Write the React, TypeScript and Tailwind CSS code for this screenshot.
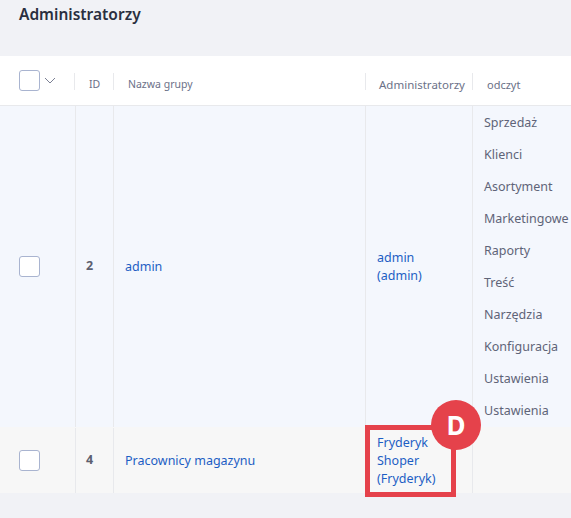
const readPerms = [
  "Sprzedaż",
  "Klienci",
  "Asortyment",
  "Marketingowe",
  "Raporty",
  "Treść",
  "Narzędzia",
  "Konfiguracja",
  "Ustawienia",
  "Ustawienia",
];

function Checkbox() {
  return <div className="h-[21px] w-[21px] rounded-[3px] border border-[#a9b4d0] bg-white" />;
}

function HeaderCell({ label, className }: { label: string; className: string }) {
  return (
    <div className={`h-[17px] border-l border-[#e8e9ec] pt-[3px] leading-[17px] whitespace-nowrap text-[#6b7188] ${className}`}>
      {label}
    </div>
  );
}

export default function App() {
  return (
    <div className="relative h-[518px] w-[571px] overflow-hidden bg-[#f1f2f6] font-['Noto_Sans',sans-serif]">
      <h1 className="h-[56px] pl-[19px] pt-[2px] text-[15.5px] leading-[24px] font-semibold text-[#2a2f3f]">
        Administratorzy
      </h1>

      <div className="grid grid-cols-[75px_38px_252px_107px_99px]">
        {/* header */}
        <div className="col-span-5 grid h-[50px] grid-cols-subgrid items-center border-b border-[#e8e9ec] bg-white pt-[2px]">
          <div className="mb-[2px] flex items-center gap-[4px] pl-[19px]">
            <Checkbox />
            <svg width="12" height="7" viewBox="0 0 12 7" fill="none" className="text-[#7b8094]">
              <path d="M1 1l5 5 5-5" stroke="currentColor" strokeWidth="1" />
            </svg>
          </div>
          <HeaderCell label="ID" className="-ml-px pl-[14px] text-[10.5px]" />
          <HeaderCell label="Nazwa grupy" className="pl-[14px] text-[10.5px]" />
          <HeaderCell label="Administratorzy" className="pl-[13px] text-[11.5px]" />
          <HeaderCell label="odczyt" className="pl-[14px] text-[11px]" />
        </div>

        {/* admin row */}
        <div className="col-span-5 grid h-[321px] grid-cols-subgrid bg-[#f4f7fd] text-[12.5px] text-[#1d5ec4]">
          <div className="flex items-center pl-[19px]">
            <Checkbox />
          </div>
          <div className="flex items-center border-l border-[#e8e9ec] pl-[10px] font-bold text-[#5c6070]">2</div>
          <div className="flex items-center border-l border-[#e8e9ec] pl-[11px] pt-[2px]">admin</div>
          <div className="flex items-center border-l border-[#e8e9ec] pl-[11px] leading-[18px]">
            <div>
              admin
              <br />
              (admin)
            </div>
          </div>
          <div className="border-l border-[#e8e9ec] pl-[11px] pt-px text-[#5f6478]">
            {readPerms.map((perm, i) => (
              <div key={i} className="h-[32px] whitespace-nowrap leading-[32px]">
                {perm}
              </div>
            ))}
          </div>
        </div>

        {/* warehouse row */}
        <div className="col-span-5 grid h-[66px] grid-cols-subgrid bg-[#f7f7f7] pt-px text-[12.5px] text-[#1d5ec4]">
          <div className="flex items-center pl-[19px]">
            <Checkbox />
          </div>
          <div className="flex items-center border-l border-[#e8e9ec] pl-[10px] font-bold text-[#5c6070]">4</div>
          <div className="flex items-center border-l border-[#e8e9ec] pl-[11px] pt-[2px]">Pracownicy magazynu</div>
          <div className="flex items-center border-l border-[#e8e9ec] pl-[11px] leading-[18px]">
            <div>
              Fryderyk
              <br />
              Shoper
              <br />
              (Fryderyk)
            </div>
          </div>
          <div className="border-l border-[#e8e9ec]" />
        </div>
      </div>

      {/* annotation */}
      <div className="absolute left-[365px] top-[425px] h-[72px] w-[91px] border-[5px] border-[#e5424b]" />
      <div className="absolute left-[431px] top-[400px] flex h-[50px] w-[50px] items-center justify-center rounded-full bg-[#e5424b] text-[26px] font-bold text-white">
        D
      </div>
    </div>
  );
}
